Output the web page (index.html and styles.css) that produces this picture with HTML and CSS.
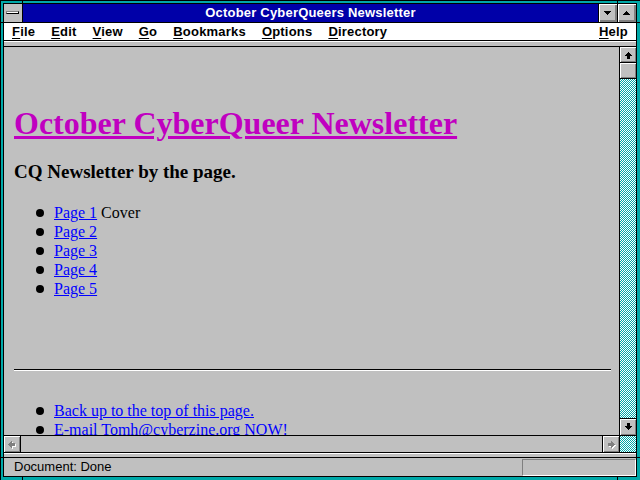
FILE: index.html
```html
<!DOCTYPE html>
<html lang="en">
<head>
    <meta charset="UTF-8">
    <title>October CyberQueers Newsletter</title>
    <link rel="stylesheet" href="styles.css">
</head>
<body>
    <div class="window">
        <!-- resize corner marks on the frame -->
        <div class="tick tick-v" style="left:21px;top:-1px"></div>
        <div class="tick tick-v" style="left:616px;top:-1px"></div>
        <div class="tick tick-v" style="left:21px;top:476px"></div>
        <div class="tick tick-v" style="left:616px;top:476px"></div>
        <div class="tick tick-h" style="left:-1px;top:21px"></div>
        <div class="tick tick-h" style="left:636px;top:21px"></div>
        <div class="tick tick-h" style="left:-1px;top:456px"></div>
        <div class="tick tick-h" style="left:636px;top:456px"></div>

        <div class="inner">
            <div class="titlebar">
                <div class="sysmenu"><span class="sysbar"></span></div>
                <div class="title">October CyberQueers Newsletter</div>
                <div class="capbtn">
                    <svg width="18" height="18" viewBox="0 0 18 18" shape-rendering="crispEdges"><path d="M5 7h7v1h-1v1h-1v1h-1v1h-1v-1h-1v-1h-1v-1h-1z"/></svg>
                </div>
                <div class="capbtn">
                    <svg width="18" height="18" viewBox="0 0 18 18" shape-rendering="crispEdges"><path d="M8 7h1v1h1v1h1v1h1v1h-7v-1h1v-1h1v-1h1z"/></svg>
                </div>
            </div>

            <div class="menubar">
                <span class="menu"><u>F</u>ile</span>
                <span class="menu"><u>E</u>dit</span>
                <span class="menu"><u>V</u>iew</span>
                <span class="menu"><u>G</u>o</span>
                <span class="menu"><u>B</u>ookmarks</span>
                <span class="menu"><u>O</u>ptions</span>
                <span class="menu"><u>D</u>irectory</span>
                <span class="menu help"><u>H</u>elp</span>
            </div>

            <div class="strip"></div>

            <div class="main">
                <div class="view">
                    <h1><a href="#" class="visited">October CyberQueer Newsletter</a></h1>
                    <h3>CQ Newsletter by the page.</h3>
                    <ul class="links">
                        <li><a href="#">Page 1</a> Cover</li>
                        <li><a href="#">Page 2</a></li>
                        <li><a href="#">Page 3</a></li>
                        <li><a href="#">Page 4</a></li>
                        <li><a href="#">Page 5</a></li>
                    </ul>
                    <hr>
                    <ul class="links bottom-links">
                        <li><a href="#">Back up to the top of this page.</a></li>
                        <li><a href="#">E-mail Tomh@cyberzine.org NOW!</a></li>
                    </ul>
                </div>
                <div class="vscroll">
                    <div class="sbtn vbtn-up">
                        <svg width="16" height="15" viewBox="0 0 16 15" shape-rendering="crispEdges"><path d="M8 5h1v1h1v1h1v1h1v1h-2v3h-3v-3h-2v-1h1v-1h1v-1h1z"/></svg>
                    </div>
                    <div class="sbtn thumb"></div>
                    <div class="vtrack">
                        <svg width="16" height="339" viewBox="0 0 16 339" shape-rendering="crispEdges">
                            <defs>
                                <pattern id="ditherV" width="2" height="2" patternUnits="userSpaceOnUse">
                                    <rect width="2" height="2" fill="#fff"/>
                                    <rect width="1" height="1" fill="#00a8a8"/>
                                    <rect x="1" y="1" width="1" height="1" fill="#00a8a8"/>
                                </pattern>
                            </defs>
                            <rect width="16" height="339" fill="url(#ditherV)"/>
                        </svg>
                    </div>
                    <div class="sbtn vbtn-down">
                        <svg width="16" height="16" viewBox="0 0 16 16" shape-rendering="crispEdges"><path d="M7 4h3v3h2v1h-1v1h-1v1h-1v1h-1v-1h-1v-1h-1v-1h-1v-1h2z"/></svg>
                    </div>
                </div>
            </div>

            <div class="hscroll">
                <div class="sbtn hbtn-left">
                    <svg width="16" height="16" viewBox="0 0 16 16" shape-rendering="crispEdges">
                        <path fill="#fff" transform="translate(1 1)" d="M4 8h1v-1h1v-1h1v-1h1v2h3v3h-3v2h-1v-1h-1v-1h-1v-1h-1z"/>
                        <path fill="#808080" d="M4 8h1v-1h1v-1h1v-1h1v2h3v3h-3v2h-1v-1h-1v-1h-1v-1h-1z"/>
                    </svg>
                </div>
                <div class="htrack"></div>
                <div class="sbtn hbtn-right">
                    <svg width="16" height="16" viewBox="0 0 16 16" shape-rendering="crispEdges">
                        <path fill="#fff" transform="translate(1 1)" d="M12 8h-1v-1h-1v-1h-1v-1h-1v2h-3v3h3v2h1v-1h1v-1h1v-1h1z"/>
                        <path fill="#808080" d="M12 8h-1v-1h-1v-1h-1v-1h-1v2h-3v3h3v2h1v-1h1v-1h1v-1h1z"/>
                    </svg>
                </div>
                <div class="corner">
                    <svg width="16" height="16" viewBox="0 0 16 16" shape-rendering="crispEdges">
                        <defs>
                            <pattern id="ditherC" width="2" height="2" patternUnits="userSpaceOnUse">
                                <rect width="2" height="2" fill="#fff"/>
                                <rect width="1" height="1" fill="#00a8a8"/>
                                <rect x="1" y="1" width="1" height="1" fill="#00a8a8"/>
                            </pattern>
                        </defs>
                        <rect width="16" height="16" fill="url(#ditherC)"/>
                    </svg>
                </div>
            </div>

            <div class="strip strip-bottom"></div>

            <div class="status">
                <span class="status-text">Document: Done</span>
                <div class="meter"></div>
            </div>
        </div>
    </div>
</body>
</html>
```

FILE: styles.css
```css
/* Netscape on Windows 3.1 look */
* {
    box-sizing: border-box;
}

body {
    margin: 0;
    width: 640px;
    height: 480px;
    overflow: hidden;
    background: #000;
}

.window {
    position: relative;
    width: 640px;
    height: 480px;
    background: #00a8a8;
    border-top: 1px solid #000;
    border-left: 1px solid #000;
    padding: 2px 3px 3px 2px;
}

.tick {
    position: absolute;
    background: #000;
}

.tick-v {
    width: 1px;
    height: 3px;
}

.tick-h {
    width: 3px;
    height: 1px;
}

.inner {
    height: 100%;
    border: 1px solid #000;
    background: #c0c0c0;
    display: flex;
    flex-direction: column;
}

/* title bar */
.titlebar {
    flex: none;
    display: flex;
    height: 19px;
    border-bottom: 1px solid #000;
}

.sysmenu {
    width: 19px;
    border-right: 1px solid #000;
    background: #c0c0c0;
    padding: 7px 0 0 2px;
}

.sysbar {
    display: block;
    width: 13px;
    height: 3px;
    background: #fff;
    border: 1px solid #000;
    border-top-color: #808080;
    border-left-color: #808080;
}

.title {
    flex: 1;
    background: #0000a8;
    color: #fff;
    font: bold 13px/18px "Liberation Sans", Arial, sans-serif;
    letter-spacing: 0.2px;
    text-align: center;
}

.capbtn {
    width: 19px;
    border-left: 1px solid #000;
    background: #c0c0c0;
    box-shadow: inset 1px 1px #fff, inset -1px -1px #808080, inset -2px -2px #808080;
}

.capbtn svg,
.sbtn svg,
.vtrack svg,
.corner svg {
    display: block;
}

/* menu bar */
.menubar {
    flex: none;
    display: flex;
    gap: 16px;
    height: 18px;
    padding-left: 8px;
    border-bottom: 1px solid #000;
    background: #fff;
    font: bold 13px/17px "Liberation Sans", Arial, sans-serif;
    letter-spacing: 0.2px;
    color: #000;
}

.menu u {
    text-underline-offset: 2px;
}

.menu.help {
    margin-left: auto;
    margin-right: 8px;
}

.strip {
    flex: none;
    height: 5px;
    border-top: 1px solid #fff;
}

.strip-bottom {
    height: 4px;
}

/* document area */
.main {
    flex: none;
    display: flex;
    height: 389px;
    border-top: 1px solid #000;
}

.view {
    flex: 1;
    overflow: hidden;
    padding: 0 8px 0 10px;
    font-family: "Liberation Serif", "Times New Roman", serif;
    color: #000;
}

.view a {
    color: #0000ff;
}

.view a.visited {
    color: #c000c0;
}

h1 {
    margin: 58px 0 0;
    font-size: 32px;
    line-height: 37px;
    font-weight: bold;
}

h3 {
    margin: 19px 0 0;
    font-size: 19px;
    line-height: 22px;
    font-weight: bold;
}

.links {
    list-style: none;
    margin: 20px 0 0;
    padding: 0;
    font-size: 16px;
    line-height: 19px;
}

.links li::before {
    content: "";
    display: inline-block;
    width: 8px;
    height: 8px;
    border-radius: 50%;
    background: #000;
    margin: 0 10px 1px 22px;
}

hr {
    margin: 71px 0 0;
    height: 0;
    border: 0;
    border-top: 1px solid #000;
    border-bottom: 1px solid #fff;
}

.bottom-links {
    margin-top: 30px;
}

/* scroll bars */
.sbtn {
    background: #c0c0c0;
    box-shadow: inset 1px 1px #fff, inset -1px -1px #808080;
}

.vscroll {
    width: 17px;
    border-left: 1px solid #000;
    display: flex;
    flex-direction: column;
}

.vbtn-up,
.thumb {
    flex: none;
    height: 16px;
    border-bottom: 1px solid #000;
}

.vtrack {
    flex: 1;
    min-height: 0;
    overflow: hidden;
    background: #80d4d4;
}

.vbtn-down {
    flex: none;
    height: 17px;
    border-top: 1px solid #000;
}

.hscroll {
    flex: none;
    display: flex;
    height: 18px;
    border-top: 1px solid #000;
    border-bottom: 1px solid #000;
}

.hbtn-left {
    width: 17px;
    border-right: 1px solid #000;
}

.htrack {
    flex: 1;
}

.hbtn-right {
    width: 18px;
    border-left: 1px solid #000;
    border-right: 1px solid #000;
}

.corner {
    flex: none;
    width: 16px;
    overflow: hidden;
    background: #80d4d4;
}

/* status bar */
.status {
    flex: 1;
    display: flex;
    border-top: 1px solid #000;
    padding-left: 10px;
    font: 13px/18px "Liberation Sans", Arial, sans-serif;
    color: #000;
}

.meter {
    margin-left: auto;
    margin-top: 1px;
    width: 114px;
    height: 17px;
    border: 1px solid #fff;
    border-top-color: #808080;
    border-left-color: #808080;
}
```
